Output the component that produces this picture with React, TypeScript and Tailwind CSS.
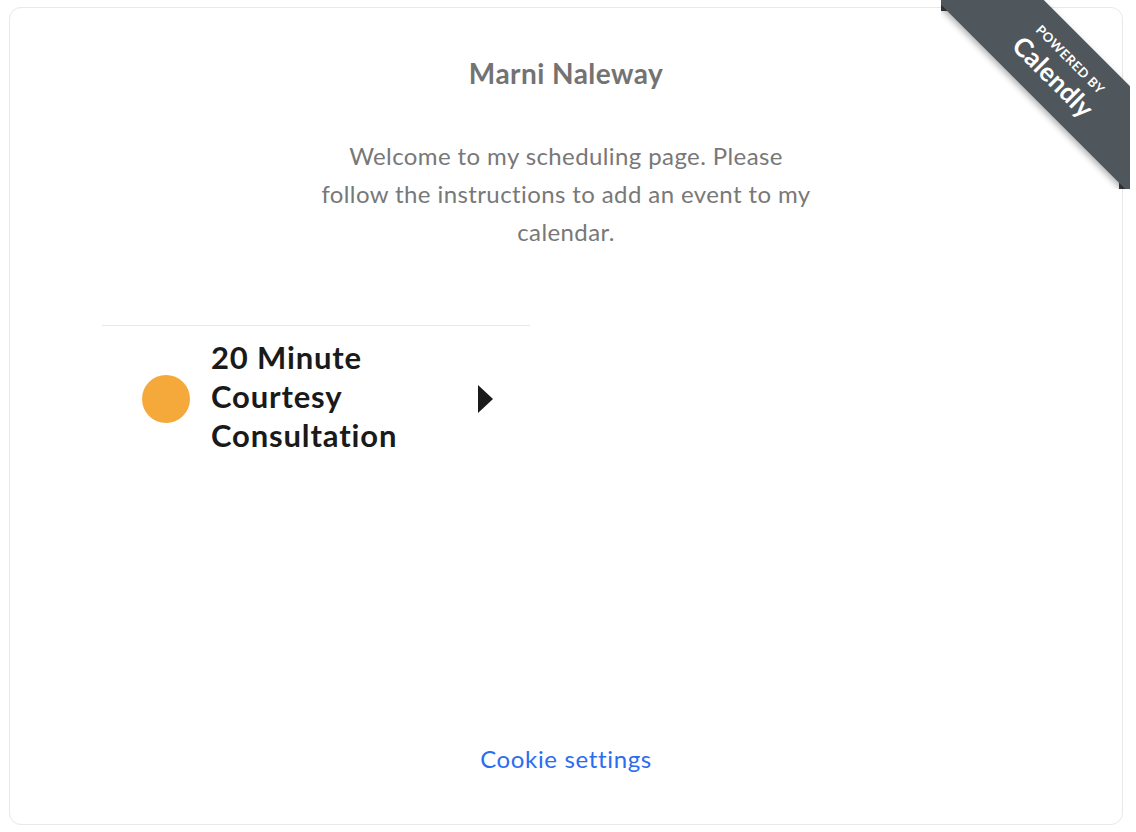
const sans = "font-['Lato','Open_Sans',sans-serif]";

function Ribbon() {
  return (
    <div className="absolute top-0 right-[6px] w-[189px] h-[189px] overflow-hidden pointer-events-none">
      <div className="absolute top-0 left-0 w-[11px] h-[11px] bg-[#3a3f44]" />
      <div className="absolute bottom-0 right-0 w-[11px] h-[11px] bg-[#3a3f44]" />
      <div className="absolute left-[-15px] top-[32px] w-[268px] h-[76px] rotate-45 bg-[#50575c] shadow-[0_3px_6px_rgba(0,0,0,0.3)] flex flex-col items-center justify-center text-white">
        <div className="text-[13px] leading-[14px] font-bold tracking-[0.6px] mt-[-1px] mb-[4px]">POWERED BY</div>
        <div className="text-[26px] leading-[26px] font-bold tracking-[0.2px]">Calendly</div>
      </div>
    </div>
  );
}

export default function App() {
  return (
    <div className={`w-[1136px] h-[832px] bg-white relative overflow-hidden pt-[7px] pl-[9px] pr-[13px] pb-[7px] ${sans}`}>
      <div className="w-[1114px] h-[818px] border border-[#e8e8e8] rounded-[12px] flex flex-col items-center">
        <h1 className="mt-[47px] text-[28px] leading-[36px] font-bold tracking-[0.45px] text-[#737373]">Marni Naleway</h1>
        <p className="mt-[46px] w-[495px] text-center text-[24px] leading-[38px] tracking-[0.4px] text-[#787878]">
          Welcome to my scheduling page. Please follow the instructions to add an event to my calendar.
        </p>
        <div className="self-start ml-[92px] mt-[74px] w-[428px] border-t border-[#e8e8e8] flex items-center pl-[40px] pr-[37px] h-[147px]">
          <span className="w-[48px] h-[48px] rounded-full bg-[#f5a93b] shrink-0" />
          <div className="ml-[21px] flex-1 mt-[-5px] text-[31px] leading-[39px] font-bold tracking-[0.85px] text-[#1a1a1a]">
            20 Minute<br />Courtesy<br />Consultation
          </div>
          <span className="w-0 h-0 border-y-[14px] border-y-transparent border-l-[15px] border-l-[#1a1a1a]" />
        </div>
        <div className="mt-auto mb-[49px] text-[24px] leading-[32px] tracking-[0.65px] text-[#2b6cf0]">Cookie settings</div>
      </div>
      <Ribbon />
    </div>
  );
}
